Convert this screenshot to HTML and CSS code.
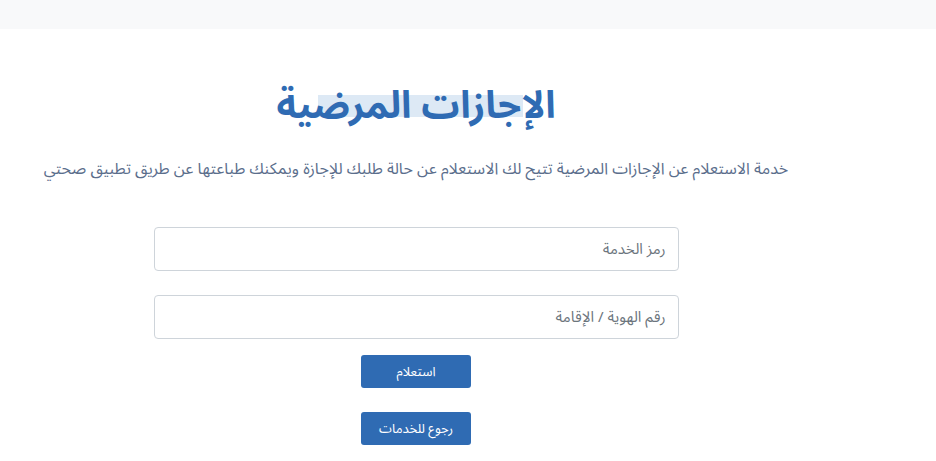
FILE: index.html
```html
<!DOCTYPE html>
<html lang="ar" dir="rtl">
<head>
<meta charset="utf-8">
<link rel="stylesheet" href="styles.css">
</head>
<body>
<div class="topbar"></div>
<main class="page">
  <h1 class="title"><span class="title-text">الإجازات المرضية</span></h1>
  <p class="lead">خدمة الاستعلام عن الإجازات المرضية تتيح لك الاستعلام عن حالة طلبك للإجازة ويمكنك طباعتها عن طريق تطبيق صحتي</p>
  <form class="form">
    <input class="field" type="text" placeholder="رمز الخدمة">
    <input class="field" type="text" placeholder="رقم الهوية / الإقامة">
    <button class="btn" type="button">استعلام</button>
    <button class="btn" type="button">رجوع للخدمات</button>
  </form>
</main>
</body>
</html>
```

FILE: styles.css
```css
html, body {
  margin: 0;
  padding: 0;
  background: #ffffff;
  font-family: "Noto Sans Arabic", "Noto Sans", "DejaVu Sans", sans-serif;
}
.topbar {
  height: 29px;
  background: #f8f9fa;
}
.page {
  width: 832px;
  margin-left: 0;
  margin-right: auto;
  display: flex;
  flex-direction: column;
  align-items: center;
}
.title {
  margin: 51px 0 0;
  font-size: 38px;
  line-height: 52px;
  font-weight: 700;
  color: #2f6bb3;
  position: relative;
}
.title-text {
  position: relative;
  z-index: 1;
}
.title::before {
  content: "";
  position: absolute;
  left: 42px;
  width: 205px;
  top: 15px;
  height: 22px;
  background: #dde9f5;
}
.lead {
  margin: 25px 0 0;
  font-size: 16px;
  line-height: 24px;
  color: #5b6e8c;
  white-space: nowrap;
}
.form {
  margin-top: 46px;
  display: flex;
  flex-direction: column;
  align-items: center;
}
.field {
  box-sizing: border-box;
  width: 525px;
  height: 44px;
  border: 1px solid #ced4da;
  border-radius: 4px;
  padding: 0 12px;
  font-family: inherit;
  font-size: 15px;
  color: #495057;
  margin-bottom: 24px;
  direction: rtl;
}
.field::placeholder {
  color: #6c757d;
}
.field + .field {
  margin-bottom: 16px;
}
.btn {
  box-sizing: border-box;
  width: 110px;
  height: 33px;
  background: #2f6bb3;
  color: #ffffff;
  border: none;
  border-radius: 3px;
  font-family: inherit;
  font-size: 13px;
  margin-bottom: 24px;
}
```
